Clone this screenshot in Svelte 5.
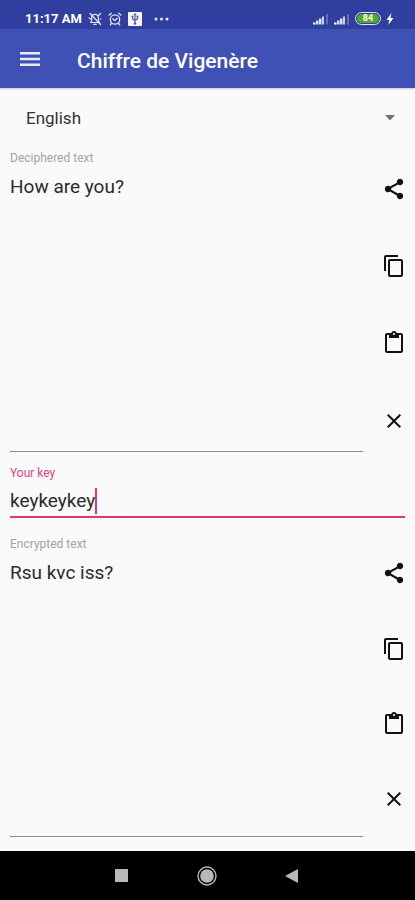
<script>
  const alphabet = 'abcdefghijklmnopqrstuvwxyz';
  let language = $state('English');
  let plain = $state('How are you?');
  let key = $state('keykeykey');
  let cipher = $state('Rsu kvc iss?');

  function shift(text, sign) {
    const letters = key.toLowerCase().replace(/[^a-z]/g, '');
    if (!letters) return text;
    let i = 0;
    return text.replace(/[a-z]/gi, (c) => {
      const step = alphabet.indexOf(letters[i++ % letters.length]) * sign;
      const out = alphabet[(alphabet.indexOf(c.toLowerCase()) + step + 26) % 26];
      return c === c.toLowerCase() ? out : out.toUpperCase();
    });
  }

  const encrypt = () => (cipher = shift(plain, 1));
  const decipher = () => (plain = shift(cipher, -1));

  async function run(action, which) {
    const value = which === 'plain' ? plain : cipher;
    if (action === 'Share') await navigator.share?.({ text: value });
    if (action === 'Copy') await navigator.clipboard?.writeText(value);
    if (action === 'Clear') plain = cipher = '';
    if (action === 'Paste') {
      const pasted = (await navigator.clipboard?.readText()) ?? '';
      if (which === 'plain') {
        plain = pasted;
        encrypt();
      } else {
        cipher = pasted;
        decipher();
      }
    }
  }

  const actions = [
    { name: 'Share', path: 'M18 15.700c-.76 0-1.440.3-1.960.770L9.200 12.700c.05-.23.09-.46.09-.7s-.04-.47-.09-.7l6.760-3.900c.54.5 1.250.81 2.040.81 1.800 0 3.200-1.400 3.200-3.200s-1.400-3.200-3.200-3.200-3.200 1.400-3.200 3.200c0 .24.04.47.09.7L8.040 9.610C7.500 9.110 6.790 8.800 6 8.800c-1.800 0-3.200 1.400-3.200 3.200s1.400 3.200 3.200 3.200c.79 0 1.500-.31 2.040-.81l6.850 4c-.05.21-.08.43-.08.65 0 1.750 1.430 3.170 3.190 3.170s3.200-1.430 3.200-3.200-1.430-3.310-3.200-3.310z' },
    { name: 'Copy', path: 'M16 1H4c-1.1 0-2 .9-2 2v14h2V3h12V1zm3 4H8c-1.1 0-2 .9-2 2v14c0 1.1.9 2 2 2h11c1.1 0 2-.9 2-2V7c0-1.1-.9-2-2-2zm0 16H8V7h11v14z' },
    { name: 'Paste', path: 'M19 2h-4.18C14.4.84 13.3 0 12 0c-1.3 0-2.4.84-2.82 2H5c-1.1 0-2 .9-2 2v16c0 1.1.9 2 2 2h14c1.1 0 2-.9 2-2V4c0-1.1-.9-2-2-2zm-7 0c.55 0 1 .45 1 1s-.45 1-1 1-1-.45-1-1 .45-1 1-1zm7 18H5V4h2v3h10V4h2v16z' },
    { name: 'Clear', path: 'M19 6.41L17.59 5 12 10.59 6.41 5 5 6.41 10.59 12 5 17.59 6.41 19 12 13.41 17.59 19 19 17.59 13.41 12z' }
  ];
</script>

{#snippet tools(which)}
  <div class="tools">
    {#each actions as action}
      <button type="button" aria-label={action.name} onclick={() => run(action.name, which)}>
        <svg width="24" height="24" viewBox="0 0 24 24" fill="currentColor"><path d={action.path} /></svg>
      </button>
    {/each}
  </div>
{/snippet}

{#snippet signal()}
  <svg width="16" height="12" viewBox="0 0 16 12" fill="#fff">
    <rect x="0" y="9.500" width="2.500" height="2" />
    <rect x="3" y="7.500" width="2.500" height="4" opacity=".85" />
    <rect x="6" y="5.500" width="2.500" height="6" opacity=".85" />
    <rect x="9" y="3.500" width="2" height="8" opacity=".75" />
    <rect x="13" y="1" width="2" height="10.500" opacity=".25" />
  </svg>
{/snippet}

<div class="screen">
  <div class="status">
    <span class="time">11:17 AM</span>
    <svg width="14" height="14" viewBox="0 0 14 14" fill="none" stroke="#e4e7f8" stroke-width="1.2" stroke-linecap="round">
      <path d="M3 10.5h8.5L10.4 9V6C10.4 3.8 9 2.4 7 2.4S3.600 3.800 3.600 6v3zM5.800 12.400h2.400M2 1.500l10.500 11M12.500 1.500l-2 2M1 6l1.500 1M13 7h-1" />
    </svg>
    <svg width="14" height="14" viewBox="0 0 14 14" fill="none" stroke="#e4e7f8" stroke-width="1.3" stroke-linecap="round">
      <circle cx="7" cy="7.5" r="4.7" /><path d="M1.200 3l2-1.800M12.800 3l-2-1.800M4.800 7l2 1.500L9.200 6.500M3.300 11.500l-1 1.300M10.700 11.500l1 1.300" />
    </svg>
    <svg width="14" height="14" viewBox="0 0 14 14">
      <rect width="14" height="14" rx="1" fill="#f6f7ff" />
      <path d="M7 2.500v8M4.500 4.500v2.500L7 8.500 9.500 7V4.500" fill="none" stroke="#4a55a8" stroke-width="1.200" />
      <path d="M7 1l1.500 2h-3z" fill="#4a55a8" /><circle cx="7" cy="11.500" r="1.300" fill="#4a55a8" />
      <circle cx="4.500" cy="4.500" r="1" fill="#4a55a8" /><rect x="8.600" y="3.600" width="1.800" height="1.800" fill="#4a55a8" />
    </svg>
    <svg class="more" width="16" height="4" viewBox="0 0 16 4" fill="#e4e7f8">
      <circle cx="2" cy="2" r="1.500" /><circle cx="7.500" cy="2" r="1.500" /><circle cx="13" cy="2" r="1.500" />
    </svg>
    <div class="right">
      {@render signal()}
      {@render signal()}
      <span class="battery"><span class="charge">84</span></span>
      <svg width="8" height="12" viewBox="0 0 8 12" fill="#fff"><path d="M5.500 0L.5 7h2.800L2.200 12 7.500 5H4.500z" /></svg>
    </div>
  </div>

  <header>
    <button type="button" class="menu" aria-label="Menu">
      <svg width="20" height="16" viewBox="0 0 20 16" fill="#e9ecfb"><path d="M0 1h20v2.500H0zM0 6.700h20v2.500H0zM0 12.400h20v2.500H0z" /></svg>
    </button>
    <h1>Chiffre de Vigenère</h1>
  </header>

  <main>
    <div class="language">
      <select aria-label="Language" bind:value={language}>
        <option>English</option>
        <option>Français</option>
      </select>
      <svg width="10" height="6" viewBox="0 0 10 6" fill="#737373"><path d="M0 0h10L5 5.500z" /></svg>
    </div>

    <section class="panel source">
      <div class="field">
        <label for="plain">Deciphered text</label>
        <textarea id="plain" spellcheck="false" bind:value={plain} oninput={encrypt}></textarea>
      </div>
      {@render tools('plain')}
    </section>

    <div class="key">
      <label for="key">Your key</label>
      <div class="entry">
        <input id="key" type="text" autocomplete="off" spellcheck="false" bind:value={key} oninput={encrypt} />
        <span class="caret"></span>
      </div>
    </div>

    <section class="panel">
      <div class="field">
        <label for="cipher">Encrypted text</label>
        <textarea id="cipher" spellcheck="false" bind:value={cipher} oninput={decipher}></textarea>
      </div>
      {@render tools('cipher')}
    </section>
  </main>

  <nav aria-label="System">
    <button type="button" aria-label="Recent apps">
      <svg width="20" height="20" viewBox="0 0 20 20"><rect x="3" y="3" width="13" height="13" fill="#b9b9b9" /></svg>
    </button>
    <button type="button" aria-label="Home">
      <svg width="20" height="20" viewBox="0 0 20 20"><circle cx="10" cy="10" r="9" fill="none" stroke="#b9b9b9" stroke-width="1.400" /><circle cx="10" cy="10" r="6.800" fill="#b9b9b9" /></svg>
    </button>
    <button type="button" aria-label="Back">
      <svg width="20" height="20" viewBox="0 0 20 20"><path d="M3 10l13-7v14z" fill="#b9b9b9" /></svg>
    </button>
  </nav>
</div>

<style>
  :global(body) {
    margin: 0;
    background: #fafafa;
  }
  .screen {
    display: flex;
    flex-direction: column;
    min-height: 100vh;
    background: #fafafa;
    color: #2b2b2b;
    font-family: Roboto, "Liberation Sans", sans-serif;
  }
  svg {
    display: block;
    flex: none;
  }
  button {
    display: flex;
    align-items: center;
    justify-content: center;
    padding: 0;
    border: 0;
    background: none;
    color: inherit;
    cursor: pointer;
  }
  .status {
    display: flex;
    align-items: center;
    gap: 6px;
    height: 21px;
    padding: 8px 21px 0 25px;
    background: #303f9f;
    color: #fff;
  }
  .time {
    font-size: 13px;
    font-weight: 700;
    line-height: 16px;
  }
  .more {
    margin-left: 6px;
  }
  .right {
    display: flex;
    align-items: center;
    gap: 5px;
    margin-left: auto;
  }
  .battery {
    display: flex;
    padding: 1px;
    border: 1px solid #dfe4f5;
    border-radius: 7px;
  }
  .charge {
    width: 22px;
    border-radius: 5px;
    background: #4caf24;
    font-size: 9px;
    font-weight: 700;
    line-height: 9px;
    text-align: center;
  }
  header {
    display: flex;
    align-items: center;
    gap: 37px;
    height: 59px;
    padding: 0 20px;
    background: #3f51b5;
    color: #fff;
    box-shadow: 0 1px 2px rgba(0, 0, 0, 0.2);
  }
  h1 {
    margin: 0;
    padding-top: 4px;
    font-size: 21px;
    font-weight: 500;
    line-height: 28px;
  }
  main {
    display: flex;
    flex: 1;
    flex-direction: column;
    padding: 14px 10px;
  }
  .language {
    display: flex;
    align-items: center;
    height: 32px;
    margin-bottom: 16px;
    position: relative;
  }
  .language svg {
    position: absolute;
    right: 10px;
    pointer-events: none;
  }
  select {
    flex: 1;
    height: 32px;
    padding: 0 16px;
    border: 0;
    outline: 0;
    appearance: none;
    background: none;
    color: #333;
    font: 17px/32px Roboto, "Liberation Sans", sans-serif;
  }
  label {
    display: block;
    color: #a3a3a3;
    font-size: 12px;
    line-height: 16px;
  }
  .panel {
    display: flex;
    flex: 1 1 128px;
    gap: 19px;
  }
  .source {
    flex-basis: 136px;
  }
  .source .field {
    margin-bottom: 8px;
  }
  .field {
    display: flex;
    flex: 1;
    flex-direction: column;
    border-bottom: 1px solid #8a8a8a;
  }
  textarea,
  input {
    display: block;
    margin: 0;
    padding: 0;
    border: 0;
    outline: 0;
    border-radius: 0;
    background: none;
    color: #2b2b2b;
    font: 19px/24px Roboto, "Liberation Sans", sans-serif;
  }
  textarea {
    flex: 1;
    min-height: 24px;
    padding-top: 9px;
    resize: none;
  }
  .tools {
    display: flex;
    flex-direction: column;
    width: 24px;
    margin-right: -1px;
  }
  .tools button {
    flex: 1;
    min-height: 32px;
    color: #111;
  }
  .key {
    padding: 5px 0 18px;
  }
  .key label {
    color: #e0457f;
  }
  .entry {
    display: flex;
    padding: 7px 0 2px;
    border-bottom: 2px solid #e0357a;
  }
  input {
    field-sizing: content;
    height: 26px;
    caret-color: transparent;
  }
  .caret {
    width: 2px;
    height: 26px;
    background: #e0357a;
  }
  nav {
    display: flex;
    align-items: center;
    justify-content: center;
    gap: 65px;
    height: 49px;
    padding-right: 2px;
    background: #000;
  }
</style>
